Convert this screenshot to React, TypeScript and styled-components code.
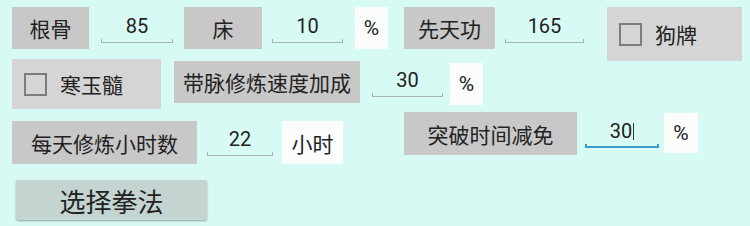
import React from "react";
import styled, { createGlobalStyle } from "styled-components";

const Global = createGlobalStyle`
  html, body { margin: 0; padding: 0; background: #d8faf5; }
  body { font-family: Roboto, "Noto Sans CJK SC", sans-serif; color: #222; }
`;

const Page = styled.div`
  width: 750px;
  height: 226px;
  overflow: hidden;
  background: #d8faf5;
  padding: 7px 0 0 12px;
  box-sizing: border-box;
  display: flex;
  flex-direction: column;
`;

const Row = styled.div<{ $h: number; $mt?: number; $ml?: number }>`
  display: flex;
  align-items: flex-start;
  height: ${(p) => p.$h}px;
  margin-top: ${(p) => p.$mt ?? 0}px;
  margin-left: ${(p) => p.$ml ?? 0}px;
`;

type Place = { $w: number; $h?: number; $ml?: number; $mt?: number; $size?: number };

const Label = styled.div<Place>`
  flex: none;
  width: ${(p) => p.$w}px;
  height: ${(p) => p.$h ?? 42}px;
  margin-left: ${(p) => p.$ml ?? 0}px;
  margin-top: ${(p) => p.$mt ?? 0}px;
  background: #c8c8c8;
  display: flex;
  align-items: center;
  justify-content: center;
  font-family: "Noto Sans CJK SC", sans-serif;
  font-size: ${(p) => p.$size ?? 21}px;
  color: #222;
`;

const Unit = styled(Label)`
  background: #fbfdfd;
  font-family: Roboto, "Noto Sans CJK SC", sans-serif;
`;

const Field = styled.div<Place>`
  flex: none;
  width: ${(p) => p.$w}px;
  height: 36px;
  margin-left: ${(p) => p.$ml ?? 0}px;
  margin-top: ${(p) => p.$mt ?? 0}px;
  display: flex;
  flex-direction: column;
  justify-content: flex-end;
`;

const Value = styled.div`
  height: 24px;
  line-height: 24px;
  margin-bottom: 1px;
  text-align: center;
  font-family: Roboto, sans-serif;
  font-size: 20px;
  color: #222;
  display: flex;
  justify-content: center;
  align-items: center;
`;

const Caret = styled.span`
  display: inline-block;
  width: 1px;
  height: 17px;
  background: #333;
  margin-left: 1px;
`;

const Underline = styled.div<{ $focus?: boolean }>`
  height: 4px;
  box-sizing: border-box;
  border: ${(p) => (p.$focus ? "2px solid #3a9ccb" : "1px solid #a9b3b2")};
  border-top: none;
`;

const CheckTile = styled.div<Place>`
  flex: none;
  width: ${(p) => p.$w}px;
  height: ${(p) => p.$h ?? 50}px;
  margin-left: ${(p) => p.$ml ?? 0}px;
  margin-top: ${(p) => p.$mt ?? 0}px;
  background: #d5d5d5;
  display: flex;
  align-items: center;
  padding-left: 12px;
  box-sizing: border-box;
  gap: 13px;
  font-family: "Noto Sans CJK SC", sans-serif;
  font-size: 21px;
  color: #222;
`;

const Box = styled.span`
  width: 23px;
  height: 23px;
  box-sizing: border-box;
  border: 2px solid #7c7c7c;
  flex: none;
`;

const ActionButton = styled.button`
  width: 191px;
  height: 40px;
  margin-left: 4px;
  border: none;
  border-radius: 2px;
  background: #c4d4d1;
  box-shadow: 0 1px 2px rgba(0, 0, 0, 0.35);
  font-family: "Noto Sans CJK SC", sans-serif;
  font-size: 26px;
  color: #222;
  padding: 0;
  display: flex;
  align-items: center;
  justify-content: center;
`;

const Num = ({ v, w, ml, mt, focus }: { v: string; w: number; ml?: number; mt?: number; focus?: boolean }) => (
  <Field $w={w} $ml={ml} $mt={mt}>
    <Value>
      {v}
      {focus && <Caret />}
    </Value>
    <Underline $focus={focus} />
  </Field>
);

export default function App() {
  return (
    <>
      <Global />
      <Page>
        <Row $h={52}>
          <Label $w={77}>根骨</Label>
          <Num v="85" w={72} ml={12} />
          <Label $w={78} $ml={11}>床</Label>
          <Num v="10" w={71} ml={10} />
          <Unit $w={33} $ml={12} $size={21}>%</Unit>
          <Label $w={91} $ml={16}>先天功</Label>
          <Num v="165" w={79} ml={10} />
          <CheckTile $w={135} $h={54} $ml={23}>
            <Box />
            狗牌
          </CheckTile>
        </Row>
        <Row $h={53}>
          <CheckTile $w={149} $h={50}>
            <Box />
            寒玉髓
          </CheckTile>
          <Label $w={186} $ml={13} $mt={2}>带脉修炼速度加成</Label>
          <Num v="30" w={71} ml={12} mt={2} />
          <Unit $w={33} $ml={7} $mt={4} $size={21}>%</Unit>
        </Row>
        <Row $h={52}>
          <Label $w={185} $h={43} $mt={9}>每天修炼小时数</Label>
          <Num v="22" w={66} ml={10} mt={8} />
          <Unit $w={61} $h={43} $ml={9} $mt={9}>小时</Unit>
          <Label $w={173} $h={43} $ml={61}>突破时间减免</Label>
          <Num v="30" w={74} ml={8} focus />
          <Unit $w={34} $h={40} $ml={5} $mt={1} $size={21}>%</Unit>
        </Row>
        <Row $h={40} $mt={16}>
          <ActionButton>选择拳法</ActionButton>
        </Row>
      </Page>
    </>
  );
}
